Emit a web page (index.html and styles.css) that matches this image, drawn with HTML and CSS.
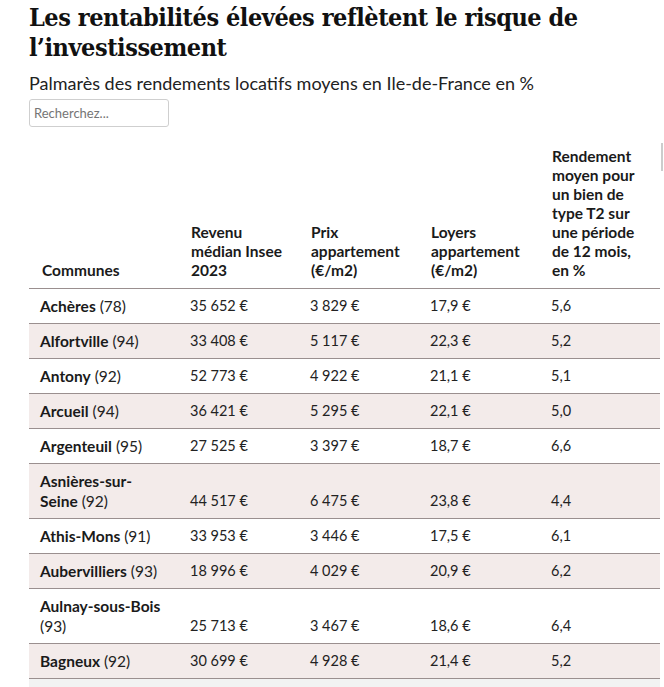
FILE: index.html
```html
<!DOCTYPE html>
<html lang="fr">
<head>
<meta charset="utf-8">
<title>Rendements locatifs</title>
<link rel="stylesheet" href="styles.css">
</head>
<body>
<div class="page">
  <h1 class="title">Les rentabilités élevées reflètent le risque de l’investissement</h1>
  <p class="subtitle">Palmarès des rendements locatifs moyens en Ile-de-France en %</p>
  <input class="search" type="text" placeholder="Recherchez...">
  <div class="scroller">
    <div class="thumb"></div>
    <table class="data">
      <colgroup>
        <col class="w-name">
        <col class="w-num">
        <col class="w-num">
        <col class="w-num2">
        <col class="w-num">
      </colgroup>
      <thead>
        <tr>
          <th class="c1">Communes</th>
          <th>Revenu médian Insee 2023</th>
          <th>Prix appartement (€/m2)</th>
          <th>Loyers appartement (€/m2)</th>
          <th>Rendement moyen pour un bien de type T2 sur une période de 12 mois, en %</th>
        </tr>
      </thead>
      <tbody>
        <tr><td class="c1"><b>Achères</b> (78)</td><td>35 652 €</td><td>3 829 €</td><td>17,9 €</td><td>5,6</td></tr>
        <tr class="alt"><td class="c1"><b>Alfortville</b> (94)</td><td>33 408 €</td><td>5 117 €</td><td>22,3 €</td><td>5,2</td></tr>
        <tr><td class="c1"><b>Antony</b> (92)</td><td>52 773 €</td><td>4 922 €</td><td>21,1 €</td><td>5,1</td></tr>
        <tr class="alt"><td class="c1"><b>Arcueil</b> (94)</td><td>36 421 €</td><td>5 295 €</td><td>22,1 €</td><td>5,0</td></tr>
        <tr><td class="c1"><b>Argenteuil</b> (95)</td><td>27 525 €</td><td>3 397 €</td><td>18,7 €</td><td>6,6</td></tr>
        <tr class="alt"><td class="c1"><b>Asnières-sur-<br>Seine</b> (92)</td><td>44 517 €</td><td>6 475 €</td><td>23,8 €</td><td>4,4</td></tr>
        <tr><td class="c1"><b>Athis-Mons</b> (91)</td><td>33 953 €</td><td>3 446 €</td><td>17,5 €</td><td>6,1</td></tr>
        <tr class="alt"><td class="c1"><b>Aubervilliers</b> (93)</td><td>18 996 €</td><td>4 029 €</td><td>20,9 €</td><td>6,2</td></tr>
        <tr><td class="c1"><b>Aulnay-sous-Bois</b><br>(93)</td><td>25 713 €</td><td>3 467 €</td><td>18,6 €</td><td>6,4</td></tr>
        <tr class="alt"><td class="c1"><b>Bagneux</b> (92)</td><td>30 699 €</td><td>4 928 €</td><td>21,4 €</td><td>5,2</td></tr>
      </tbody>
    </table>
  </div>
  <div class="hbar"></div>
</div>
</body>
</html>
```
FILE: styles.css
```css
html, body {
  margin: 0;
  padding: 0;
  background: #ffffff;
}
.page {
  padding: 0 0 0 29px;
  font-family: Lato, "Noto Sans", sans-serif;
  color: #1a1a1a;
}
.title {
  margin: 0;
  padding-top: 3px;
  width: 600px;
  font-family: "DejaVu Serif Condensed", "DejaVu Serif", serif;
  font-weight: bold;
  font-size: 25px;
  line-height: 30px;
  color: #111111;
  letter-spacing: -0.45px;
}
.subtitle {
  margin: 8px 0 0 0;
  font-size: 18px;
  line-height: 24px;
  color: #222222;
}
.search {
  display: block;
  margin-top: 4px;
  box-sizing: border-box;
  width: 140px;
  height: 28px;
  padding: 0 4px;
  border: 1px solid #cfcfcf;
  border-radius: 3px;
  font-family: Lato, "Noto Sans", sans-serif;
  font-size: 13px;
  color: #333;
}
.search::placeholder {
  color: #757575;
}
.scroller {
  position: relative;
  margin-top: 14px;
  width: 635px;
}
.thumb {
  position: absolute;
  right: 1px;
  top: 2px;
  width: 2px;
  height: 28px;
  background: #cccccc;
}
.data {
  border-collapse: collapse;
  width: 631px;
  table-layout: fixed;
  font-size: 15.5px;
  line-height: 20px;
}
.w-name { width: 150px; }
.w-num { width: 120px; }
.w-num2 { width: 121px; }
.data th {
  text-align: left;
  vertical-align: bottom;
  font-weight: bold;
  line-height: 19px;
  padding: 6px 12px 8px 12px;
  border-bottom: 1px solid #9a8f8f;
  color: #1a1a1a;
}
.data th.c1 {
  padding-left: 13px;
}
.data td {
  padding: 7px 8px 7px 11px;
  border-bottom: 1px solid #9a8f8f;
  vertical-align: bottom;
  font-size: 14.5px;
  color: #222;
}
.data td.c1 {
  font-size: 15.5px;
  padding-left: 11px;
}
.data td b {
  font-weight: bold;
  color: #1a1a1a;
}
.data tr.alt td {
  background: #f3ebea;
}
.hbar {
  width: 631px;
  height: 8px;
  background: #f2f2f2;
}
```
